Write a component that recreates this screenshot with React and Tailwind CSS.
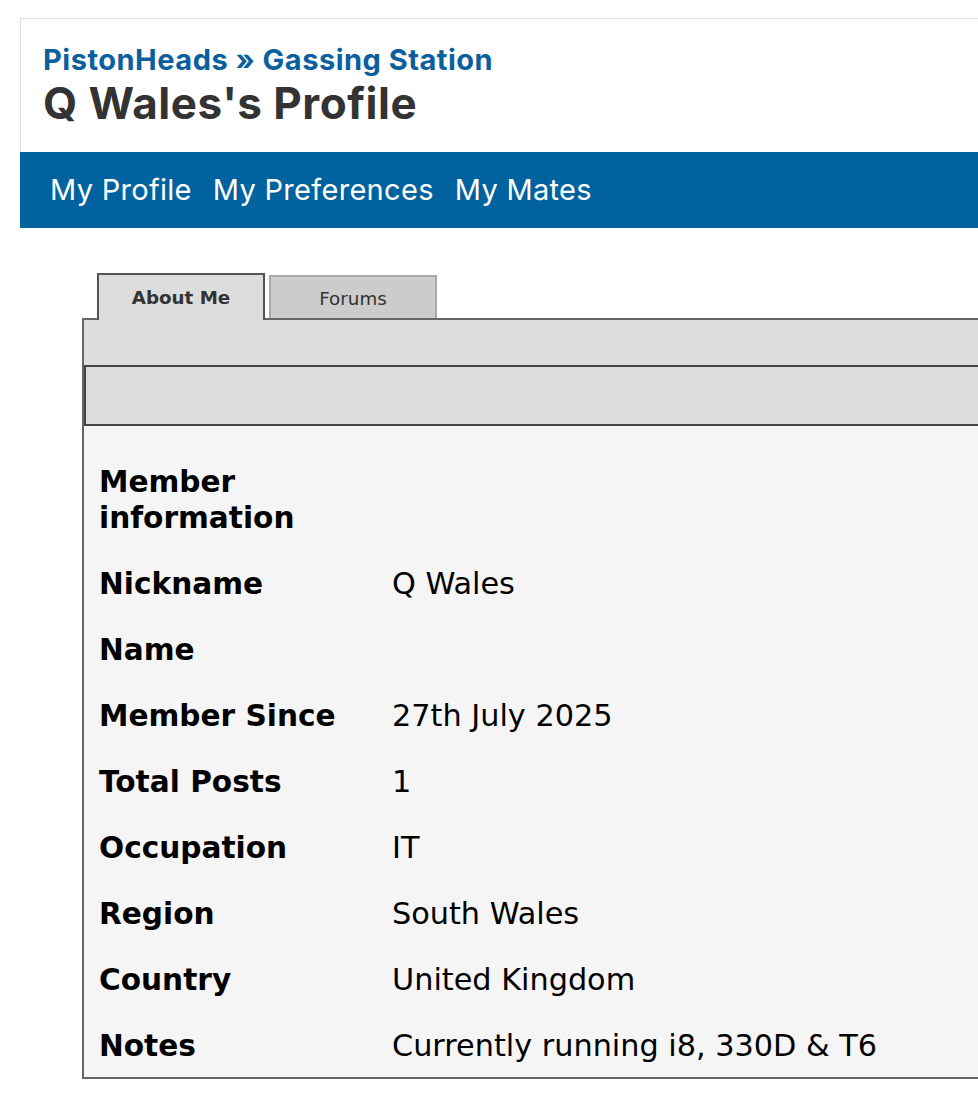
const SANS = "font-['Inter','Liberation_Sans',sans-serif]"
const VERDANA = "font-['DejaVu_Sans','Liberation_Sans',sans-serif]"

const ROWS = [
  { label: 'Member information', value: '' },
  { label: 'Nickname', value: 'Q Wales' },
  { label: 'Name', value: '' },
  { label: 'Member Since', value: '27th July 2025' },
  { label: 'Total Posts', value: '1' },
  { label: 'Occupation', value: 'IT' },
  { label: 'Region', value: 'South Wales' },
  { label: 'Country', value: 'United Kingdom' },
  { label: 'Notes', value: 'Currently running i8, 330D & T6' },
]

function Header() {
  return (
    <header className={`ml-[20px] mt-[18px] ${SANS}`}>
      <div className="border-l border-t border-[#dddddd] bg-white px-[22px] pb-[23px] pt-[24px]">
        <p className="text-[29px] font-bold leading-[34px] tracking-[0.5px] text-[#0a609e]">
          <a href="#">PistonHeads</a> » <a href="#">Gassing Station</a>
        </p>
        <h1 className="text-[44px] font-bold leading-[52px] tracking-[0.5px] text-[#333333]">
          Q Wales's Profile
        </h1>
      </div>
      <nav className="flex h-[76px] items-center gap-[21px] bg-[#00629e] pl-[30px] text-[29px] tracking-[0.3px] text-white">
        <a href="#">My Profile</a>
        <a href="#">My Preferences</a>
        <a href="#">My Mates</a>
      </nav>
    </header>
  )
}

function Tabs() {
  return (
    <div className={`ml-[97px] mt-[45px] flex items-end gap-[4px] ${VERDANA}`}>
      <div className="relative z-10 -mb-[2px] flex h-[47px] w-[168px] items-center justify-center border-2 border-b-0 border-[#555555] bg-[#dddddd] text-[18.3px] font-bold text-[#333333]">
        About Me
      </div>
      <div className="flex h-[43px] w-[168px] items-center justify-center border-2 border-b-0 border-[#aaaaaa] bg-[#cccccc] pt-[2px] text-[18.3px] text-[#333333]">
        Forums
      </div>
    </div>
  )
}

function AboutPanel() {
  return (
    <section className={`ml-[82px] border-y-2 border-l-2 border-[#666666] bg-[#f5f5f5] ${VERDANA}`}>
      <div className="h-[45px] bg-[#dddddd]" />
      <div className="h-[61px] border-2 border-r-0 border-[#444444] bg-[#dddddd]" />
      <dl className="grid grid-cols-[293px_1fr] pl-[15px] pt-[23px] leading-[36px] text-black">
        {ROWS.map((row, i) => {
          const last = i === ROWS.length - 1
          return (
            <div key={row.label} className="contents">
              <dt className={`pr-[16px] pt-[15px] text-[29.6px] font-bold ${last ? 'pb-[13px]' : 'pb-[15px]'}`}>
                {row.label}
              </dt>
              <dd className={`pt-[15px] text-[30.3px] ${last ? 'pb-[13px]' : 'pb-[15px]'}`}>{row.value}</dd>
            </div>
          )
        })}
      </dl>
    </section>
  )
}

export default function App() {
  return (
    <div className="min-h-screen overflow-hidden bg-white">
      <Header />
      <Tabs />
      <AboutPanel />
    </div>
  )
}
